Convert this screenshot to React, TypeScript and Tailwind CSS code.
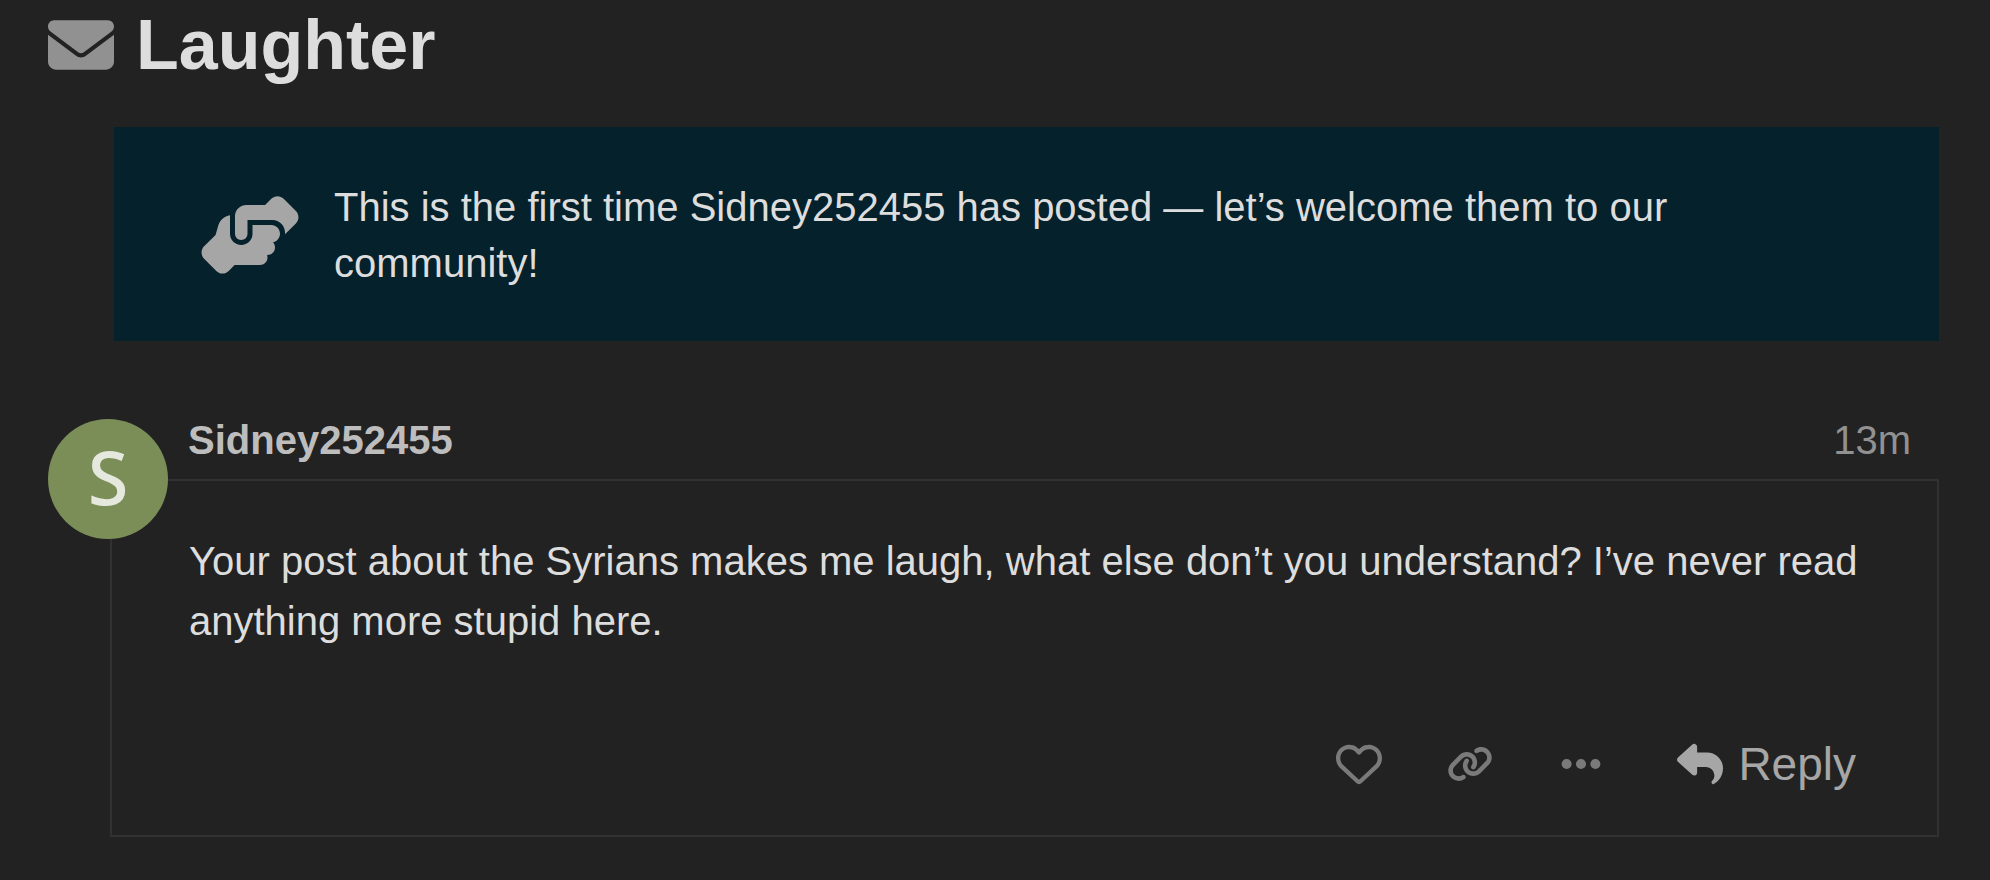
import { FaEllipsis, FaEnvelope, FaHandshakeAngle, FaLink, FaRegHeart, FaReply } from "react-icons/fa6";

const post = {
  username: "Sidney252455",
  age: "13m",
  body: "Your post about the Syrians makes me laugh, what else don’t you understand? I’ve never read anything more stupid here.",
};

function TopicTitle({ title }: { title: string }) {
  return (
    <header className="flex items-center gap-[22px] text-[70px] leading-[90px]">
      <FaEnvelope className="size-[66px] text-[#919191]" aria-hidden="true" />
      <h1 className="font-bold">{title}</h1>
    </header>
  );
}

function NewUserNotice({ username }: { username: string }) {
  return (
    <aside className="mt-[37px] ml-[66px] flex items-center gap-[34px] bg-[#05212b] px-[86px] pt-[52px] pb-[50px]">
      <FaHandshakeAngle className="h-20 w-[100px] shrink-0 text-[#a6a6a6]" aria-hidden="true" />
      <p className="leading-[56px]">
        {`This is the first time ${username} has posted — let’s welcome them to our community!`}
      </p>
    </aside>
  );
}

function Avatar({ name }: { name: string }) {
  return (
    <div className="absolute top-0 left-0 flex size-[120px] items-center justify-center rounded-full bg-[#7b8e57] pb-1 font-['Noto_Sans',sans-serif] text-[74px] leading-none font-medium text-[#e5e8dd]">
      {name[0]}
    </div>
  );
}

function PostActions() {
  return (
    <div className="mt-[83px] flex items-center justify-end gap-[65px] pr-1 text-[46px] leading-[60px] text-[#7a7a7a]">
      <button type="button" aria-label="Like this post">
        <FaRegHeart className="size-[46px]" />
      </button>
      <button type="button" aria-label="Share a link to this post">
        <FaLink className="size-[46px]" />
      </button>
      <button type="button" aria-label="Show more">
        <FaEllipsis className="size-[46px]" />
      </button>
      <button type="button" className="ml-2 flex items-center gap-[15px] text-[#a6a6a6]">
        <FaReply className="size-[46px]" aria-hidden="true" />
        Reply
      </button>
    </div>
  );
}

export default function App() {
  return (
    <main className="min-h-screen bg-[#222] pr-[51px] pl-12 font-['Liberation_Sans',Arial,sans-serif] text-[40px] text-[#ddd]">
      <TopicTitle title="Laughter" />
      <NewUserNotice username={post.username} />

      <article className="relative mt-[78px]">
        <Avatar name={post.username} />
        <div className="flex justify-between pr-7 pb-[18px] pl-[140px] leading-[42px]">
          <a href="#user" className="font-bold text-[#bdbdbd]">
            {post.username}
          </a>
          <a href="#post" className="text-[#919191]">
            {post.age}
          </a>
        </div>
        <div className="ml-[62px] border-2 border-[#313131] px-[77px] pt-[50px] pb-[41px]">
          <p className="leading-[60px]">{post.body}</p>
          <PostActions />
        </div>
      </article>
    </main>
  );
}
